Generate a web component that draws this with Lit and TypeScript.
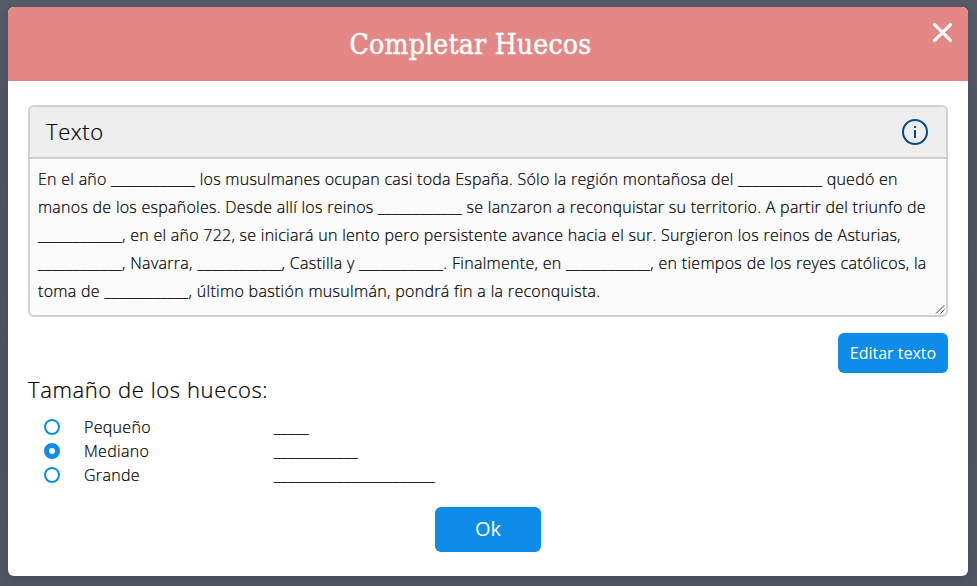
import { LitElement, html, css } from "lit";
import { customElement, state } from "lit/decorators.js";

const LINES = [
  "En el año ____________ los musulmanes ocupan casi toda España. Sólo la región montañosa del ____________ quedó en",
  "manos de los españoles. Desde allí los reinos ____________ se lanzaron a reconquistar su territorio. A partir del triunfo de",
  "____________, en el año 722, se iniciará un lento pero persistente avance hacia el sur. Surgieron los reinos de Asturias,",
  "____________, Navarra, ____________, Castilla y ____________. Finalmente, en ____________, en tiempos de los reyes católicos, la",
  "toma de ____________, último bastión musulmán, pondrá fin a la reconquista.",
];

const SIZES = [
  { name: "Pequeño", gap: 5 },
  { name: "Mediano", gap: 12 },
  { name: "Grande", gap: 23 },
];

const withGaps = (line: string) =>
  line.split(/(_+)/).map((part) => (part.startsWith("_") ? html`<span class="gap">${part}</span>` : part));

@customElement("app-root")
export class AppRoot extends LitElement {
  @state() private selected = 1;

  static styles = css`
    :host {
      display: block;
      box-sizing: border-box;
      height: 586px;
      padding: 7px 9px 10px 8px;
      overflow: hidden;
      background: linear-gradient(#555b67, #4d545f 25%, #4f5562);
      font: 300 16px/24px "Open Sans", sans-serif;
      color: #000;
    }
    * { box-sizing: border-box; }
    .dialog {
      height: 569px;
      border-radius: 6px;
      background: #fff;
      overflow: hidden;
      box-shadow: 0 2px 8px rgba(0, 0, 0, 0.12);
    }
    .header {
      position: relative;
      height: 74px;
      display: flex;
      align-items: center;
      justify-content: center;
      padding: 2px 35px 0 0;
      background: #e38886;
    }
    .title {
      margin: 0;
      color: #fff;
      font: 400 28px/38px "Roboto Slab", "DejaVu Serif Condensed", "DejaVu Serif", serif;
      letter-spacing: 0.25px;
      -webkit-text-stroke: 0.5px #fff;
      white-space: nowrap;
    }
    .close {
      position: absolute;
      top: 15px;
      right: 15px;
      width: 21px;
      height: 21px;
    }
    .body { padding: 24px 20px 0; display: flex; flex-direction: column; }
    .panel {
      height: 212px;
      border: 2px solid #d0d0d0;
      border-radius: 6px;
      background: #fbfbfb;
      overflow: hidden;
      position: relative;
    }
    .panel-head {
      height: 52px;
      display: flex;
      align-items: center;
      justify-content: space-between;
      padding: 0 17px 0 16px;
      background: #eee;
      border-bottom: 2px solid #d0d0d0;
      font-size: 22px;
      letter-spacing: 0.6px;
    }
    .panel-head span { padding-bottom: 2px; }
    .info { width: 28px; height: 28px; }
    .text { padding: 6px 8px; line-height: 28px; white-space: nowrap; letter-spacing: 0.24px; word-spacing: 0.1px; }
    .line:nth-child(n + 4) { letter-spacing: 0.29px; }
    .text, .row, .label, .panel-head span { -webkit-text-stroke: 0.2px #000; }
    .gap { letter-spacing: 0.43px; -webkit-text-stroke: 0.3px #000; }
    .grip { position: absolute; right: 0; bottom: 0; width: 12px; height: 12px; }
    button {
      border: 0;
      padding: 0;
      border-radius: 6px;
      background: #0d8cea;
      color: #fff;
      font: 400 16px/24px "Open Sans", sans-serif;
    }
    .edit { align-self: flex-end; width: 110px; height: 40px; margin-top: 16px; }
    .label { font-size: 22px; line-height: 32px; letter-spacing: 0.6px; }
    .sizes { margin-top: 10px; padding-left: 16px; }
    .row { display: grid; grid-template-columns: 40px 190px auto; align-items: center; height: 24px; letter-spacing: 0.3px; }
    .row .gap { padding-bottom: 1px; line-height: 22px; }
    .radio {
      width: 16px;
      height: 16px;
      border: 2px solid #0d8cea;
      border-radius: 50%;
      background: #fff;
    }
    .radio.on { border-width: 5px; }
    .ok { align-self: center; width: 106px; height: 45px; margin-top: 20px; padding-bottom: 2px; font-size: 20px; }
  `;

  render() {
    return html`
      <div class="dialog">
        <div class="header">
          <h1 class="title">Completar Huecos</h1>
          <svg class="close" viewBox="0 0 21 21" fill="none" stroke="#fff" stroke-width="3.2" stroke-linecap="round">
            <path d="M2.6 2.6 18.4 18.4M18.4 2.6 2.6 18.4" />
          </svg>
        </div>
        <div class="body">
          <div class="panel">
            <div class="panel-head">
              <span>Texto</span>
              <svg class="info" viewBox="0 0 28 28">
                <circle cx="14" cy="14" r="12" fill="none" stroke="#034a8b" stroke-width="2" />
                <rect x="13" y="8" width="2" height="2" fill="#034a8b" />
                <rect x="13" y="12" width="2" height="8" fill="#034a8b" />
              </svg>
            </div>
            <div class="text">${LINES.map((line) => html`<div class="line">${withGaps(line)}</div>`)}</div>
            <svg class="grip" viewBox="0 0 12 12" stroke="#444" stroke-width="1" fill="none">
              <path d="M2 10.5 10.5 2M6.5 10.5 10.5 6.5" />
            </svg>
          </div>
          <button class="edit">Editar texto</button>
          <div class="label">Tamaño de los huecos:</div>
          <div class="sizes">
            ${SIZES.map(
              (size, i) => html`
                <div class="row" @click=${() => (this.selected = i)}>
                  <span class="radio ${this.selected === i ? "on" : ""}"></span>
                  <span>${size.name}</span>
                  <span class="gap">${"_".repeat(size.gap)}</span>
                </div>
              `
            )}
          </div>
          <button class="ok">Ok</button>
        </div>
      </div>
    `;
  }
}
